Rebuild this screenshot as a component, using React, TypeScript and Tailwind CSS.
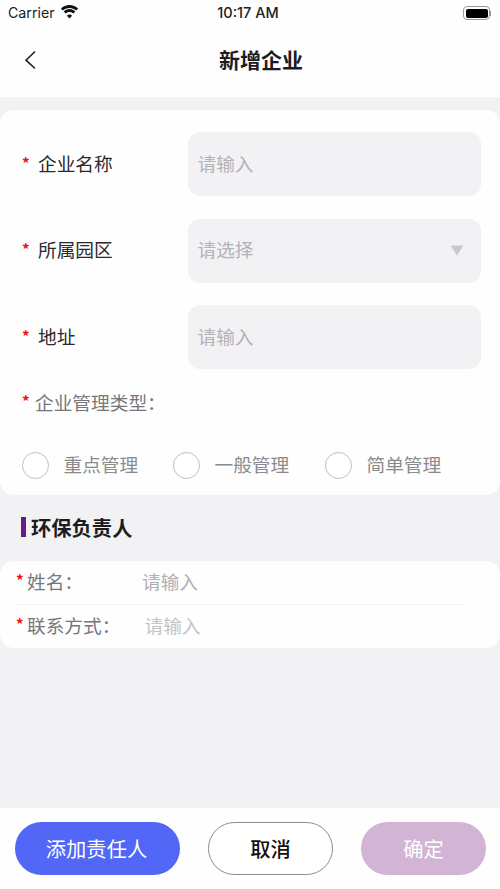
const cjk = "font-['Noto_Sans_CJK_SC','Noto_Sans',sans-serif]";

function Star({ className = '' }: { className?: string }) {
  return <span className={`text-[#f01010] font-bold leading-none ${className}`}>*</span>;
}

function StatusBar() {
  return (
    <div className="h-[26px] flex items-center justify-between pl-2 pr-[9px] font-['Inter',sans-serif] text-[#222]">
      <div className="flex items-center gap-[5px] w-[150px]">
        <span className="text-[14.200px]">Carrier</span>
        <svg width="19" height="14" viewBox="0 0 19 14" fill="#111" className="-mt-[2px]">
          <path d="M9.500 2.900c2.600 0 4.900 1 6.700 2.700l1.900-2C15.800 1.300 12.800 0 9.500 0S3.200 1.300.9 3.600l1.900 2c1.800-1.700 4.100-2.700 6.700-2.700z" />
          <path d="M9.500 6.900c1.500 0 2.900.6 3.900 1.600l1.900-2C13.800 5 11.800 4.100 9.500 4.100S5.200 5 3.700 6.500l1.900 2c1-1 2.400-1.600 3.900-1.600z" />
          <path d="M9.500 9.600c-1 0-1.900.4-2.600 1.100l2.600 2.800 2.600-2.800c-.7-.7-1.600-1.100-2.600-1.100z" />
        </svg>
      </div>
      <span className="text-[14.500px] font-medium -ml-[3px]">10:17 AM</span>
      <div className="w-[150px] flex justify-end items-center">
        <div className="w-[27px] h-[14px] rounded-[4px] border border-[#999] p-[1.500px] flex">
          <div className="flex-1 rounded-[2px] bg-black" />
        </div>
        <div className="w-[1px] h-[5px] bg-[#999]" />
      </div>
    </div>
  );
}

function FormRow({ label, placeholder, arrow }: { label: string; placeholder: string; arrow?: boolean }) {
  return (
    <div className="flex items-center">
      <div className="w-[166px] flex items-center text-[18.700px] text-[#2a2a2c]">
        <Star className="w-[16px] text-[15px] -mt-[3px]" />
        <span className="-mt-[2px]">{label}</span>
      </div>
      <div className="w-[293px] h-[64px] rounded-[12px] bg-[#f2f2f5] flex items-center justify-between pl-[9.500px] pr-[17px]">
        <span className="text-[18.700px] text-[#b3b3b6] -mt-[2px]">{placeholder}</span>
        {arrow && (
          <svg width="14" height="11" viewBox="0 0 14 11" fill="#c9c9cc">
            <path d="M0.500 0.500h13L7 10.500z" />
          </svg>
        )}
      </div>
    </div>
  );
}

function Radio({ label, width }: { label: string; width: string }) {
  return (
    <div className={`flex items-center ${width}`}>
      <div className="w-[27px] h-[27px] rounded-full border border-[#c0c0c2] bg-white" />
      <span className="ml-[14.500px] text-[18.700px] text-[#8a8a8d] -mt-[2px]">{label}</span>
    </div>
  );
}

function ContactRow({ label, indent, light }: { label: string; indent: string; light?: boolean }) {
  return (
    <div className="flex items-center h-[43px] pl-[16px] pb-[3px]">
      <Star className="w-[11px] text-[15px] -mt-[3px]" />
      <span className={`text-[18.700px] text-[#77777b] ${indent}`}>{label}</span>
      <span className={`text-[18.700px] ${light ? 'text-[#c4c4c6]' : 'text-[#b0b0b3]'}`}>请输入</span>
    </div>
  );
}

export default function App() {
  return (
    <div className={`h-[889px] w-[500px] flex flex-col bg-[#f2f2f5] overflow-hidden ${cjk}`}>
      {/* Header */}
      <div className="h-[97px] bg-[#fefefe]">
        <StatusBar />
        <div className="relative h-[71px] flex items-center justify-center pl-[22px] pb-[4px]">
          <svg className="absolute left-[24px] top-[24px]" width="12" height="20" viewBox="0 0 12 20" fill="none" stroke="#222" strokeWidth="1.600">
            <path d="M11 1.500 2 10.200l9 8.300" />
          </svg>
          <span className="text-[21px] font-bold text-[#1c1c1e]">新增企业</span>
        </div>
      </div>

      {/* Company form */}
      <div className="mt-[13px] h-[385px] rounded-[14px] bg-[#fefefe] pt-[22px] pl-[22px]">
        <div className="flex flex-col gap-[22.500px]">
          <FormRow label="企业名称" placeholder="请输入" />
          <FormRow label="所属园区" placeholder="请选择" arrow />
          <FormRow label="地址" placeholder="请输入" />
        </div>
        <div className="mt-[19px] flex items-center h-[28px] text-[18.700px] text-[#77777b]">
          <Star className="w-[13px] text-[15px] -mt-[3px]" />
          <span>企业管理类型：</span>
        </div>
        <div className="mt-[36px] flex items-center">
          <Radio label="重点管理" width="w-[151px]" />
          <Radio label="一般管理" width="w-[152px]" />
          <Radio label="简单管理" width="w-[150px]" />
        </div>
      </div>

      {/* Contact section */}
      <div className="h-[66px] flex items-center pl-[21px] gap-[5px] pb-[2px]">
        <div className="w-[5px] h-[20px] bg-[#6a1b82]" />
        <span className="text-[20.300px] font-bold text-[#1c1c1e]">环保负责人</span>
      </div>
      <div className="h-[87px] rounded-[14px] bg-[#fefefe]">
        <ContactRow label="姓名：" indent="w-[115px]" />
        <div className="h-px w-[450px] ml-[15px] bg-[#f4f4f6]" />
        <ContactRow label="联系方式：" indent="w-[117.500px]" light />
      </div>

      {/* Footer */}
      <div className="mt-auto h-[81px] bg-[#fefefe] flex items-start pt-[14px] pl-[15px] text-[20.300px]">
        <button className="w-[165px] h-[53px] rounded-full bg-[#5267f5] text-white pr-[2px] pb-[1px]">添加责任人</button>
        <button className="ml-[28px] w-[125px] h-[53px] rounded-full border border-[#8c8c8c] bg-white text-[#111] font-medium pb-[1px]">取消</button>
        <button className="ml-[28px] w-[125px] h-[53px] rounded-full bg-[#d2b4d4] text-white pb-[1px]">确定</button>
      </div>
    </div>
  );
}
